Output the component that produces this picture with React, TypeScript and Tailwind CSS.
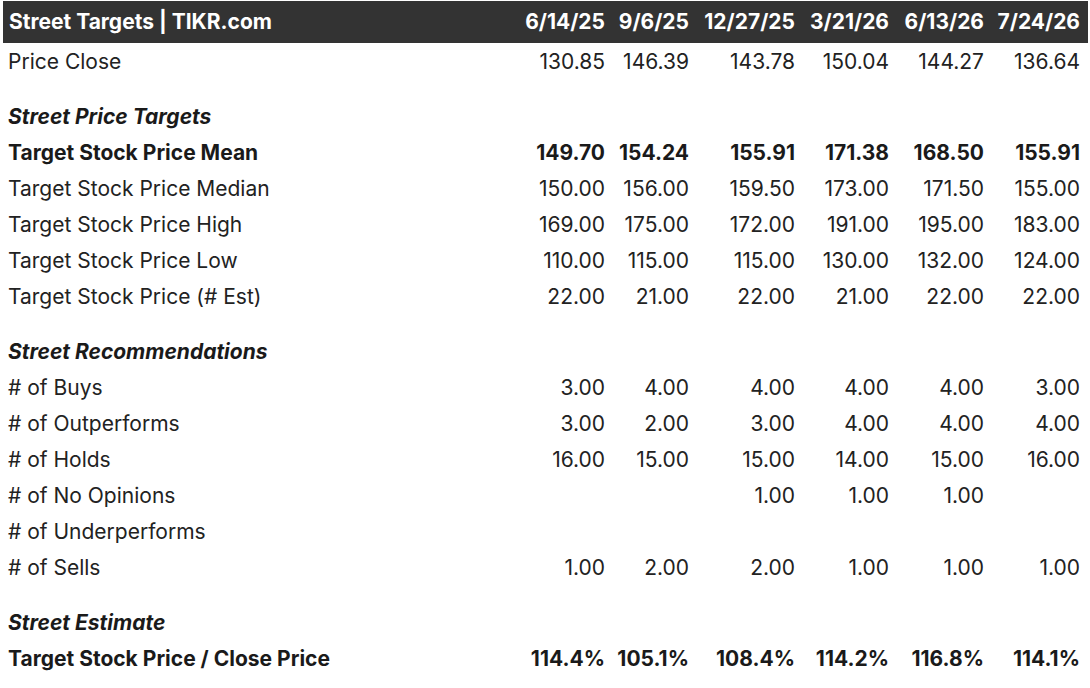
import React from "react";

type Row = { label: string; vals: string[]; kind?: "bold" | "section" | "normal"; spacer?: boolean };

const dates = ["6/14/25", "9/6/25", "12/27/25", "3/21/26", "6/13/26", "7/24/26"];

const rows: Row[] = [
  { label: "Price Close", vals: ["130.85", "146.39", "143.78", "150.04", "144.27", "136.64"] },
  { label: "Street Price Targets", vals: [], kind: "section", spacer: true },
  { label: "Target Stock Price Mean", vals: ["149.70", "154.24", "155.91", "171.38", "168.50", "155.91"], kind: "bold" },
  { label: "Target Stock Price Median", vals: ["150.00", "156.00", "159.50", "173.00", "171.50", "155.00"] },
  { label: "Target Stock Price High", vals: ["169.00", "175.00", "172.00", "191.00", "195.00", "183.00"] },
  { label: "Target Stock Price Low", vals: ["110.00", "115.00", "115.00", "130.00", "132.00", "124.00"] },
  { label: "Target Stock Price (# Est)", vals: ["22.00", "21.00", "22.00", "21.00", "22.00", "22.00"] },
  { label: "Street Recommendations", vals: [], kind: "section", spacer: true },
  { label: "# of Buys", vals: ["3.00", "4.00", "4.00", "4.00", "4.00", "3.00"] },
  { label: "# of Outperforms", vals: ["3.00", "2.00", "3.00", "4.00", "4.00", "4.00"] },
  { label: "# of Holds", vals: ["16.00", "15.00", "15.00", "14.00", "15.00", "16.00"] },
  { label: "# of No Opinions", vals: ["", "", "1.00", "1.00", "1.00", ""] },
  { label: "# of Underperforms", vals: ["", "", "", "", "", ""] },
  { label: "# of Sells", vals: ["1.00", "2.00", "2.00", "1.00", "1.00", "1.00"] },
  { label: "Street Estimate", vals: [], kind: "section", spacer: true },
  { label: "Target Stock Price / Close Price", vals: ["114.4%", "105.1%", "108.4%", "114.2%", "116.8%", "114.1%"], kind: "bold" },
];

const grid = "grid grid-cols-[1fr_96px_84px_106px_94px_95px_96px] pr-[8px] pl-[5px] items-center";

export default function App() {
  return (
    <div
      className="w-[1090px] h-[688px] bg-white text-[21px] text-[#222222] overflow-hidden"
      style={{ fontFamily: "Inter, 'Noto Sans', sans-serif" }}
    >
      <div className="ml-[3px] mr-[2px] pt-[1px]">
        <div className={`${grid} h-[42px] bg-[#333333] text-white font-bold`}>
          <div className="pl-[1px]">Street Targets | TIKR.com</div>
          {dates.map((d) => (
            <div key={d} className="text-right">{d}</div>
          ))}
        </div>
        {rows.map((r) => (
          <React.Fragment key={r.label}>
            {r.spacer && <div className="h-[19px]" />}
            <div
              className={`${grid} h-[36px] pt-[2px] ${
                r.kind === "bold" ? "font-bold text-[#1a1a1a]" : r.kind === "section" ? "font-bold italic text-[#1a1a1a]" : ""
              }`}
            >
              <div>{r.label}</div>
              {r.kind !== "section" &&
                r.vals.map((v, i) => (
                  <div key={i} className="text-right">{v}</div>
                ))}
            </div>
          </React.Fragment>
        ))}
      </div>
    </div>
  );
}
